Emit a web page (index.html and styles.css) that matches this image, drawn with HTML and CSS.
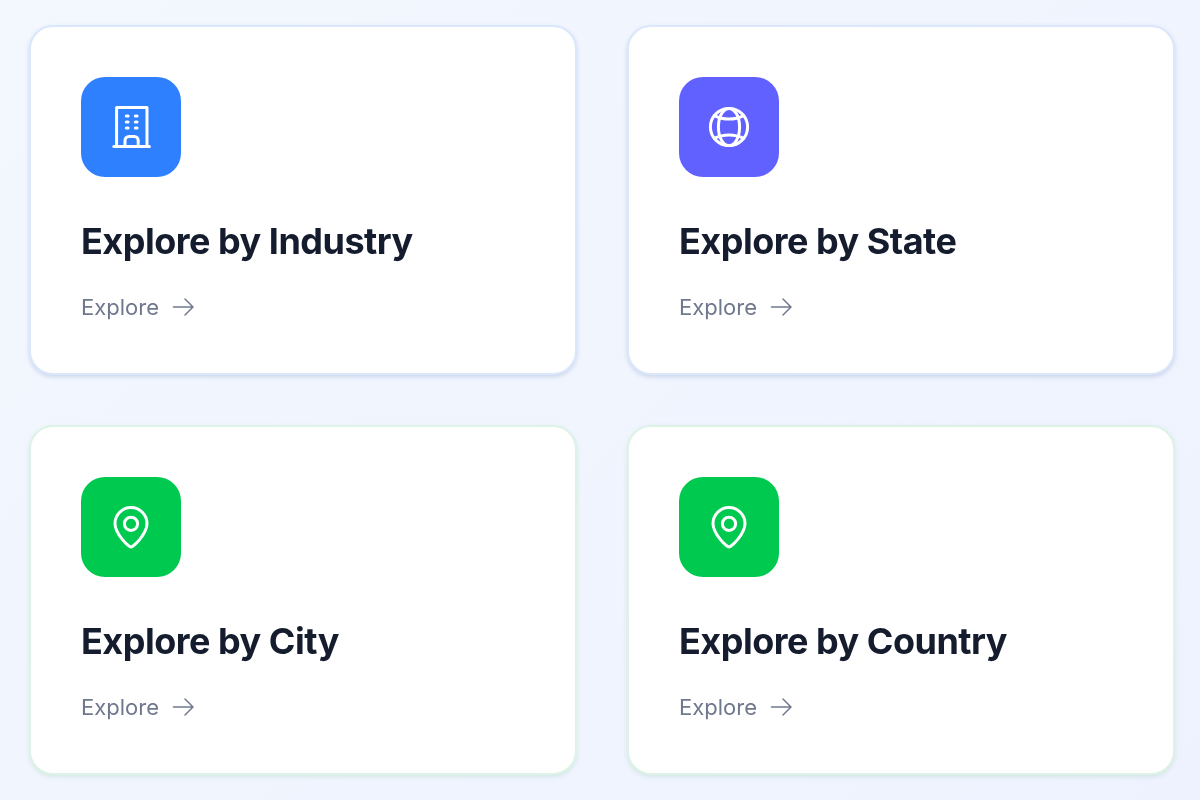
FILE: index.html
```html
<!DOCTYPE html>
<html lang="en">
<head>
  <meta charset="UTF-8" />
  <meta name="viewport" content="width=device-width, initial-scale=1" />
  <title>Explore</title>
  <link rel="stylesheet" href="styles.css">
</head>
<body>
  <div class="grid">
    <a class="card card-blue" href="#">
      <div class="icon icon-blue">
        <svg viewBox="0 0 24 24" width="48" height="48"><path d="M3.400 21.700h17.800M4.800 21.700V2.200h15.200v19.500M9 21.700v-3a2 2 0 0 1 2-2h2.600a2 2 0 0 1 2 2v3"/><path class="dots" d="M9.700 6.500h.8M14.200 6.500h.8M9.700 9.500h.8M14.200 9.500h.8M9.700 12.500h.8M14.200 12.500h.8"/></svg>
      </div>
      <h2>Explore by Industry</h2>
      <div class="link">Explore
        <svg viewBox="0 0 24 24" width="24" height="24"><path d="M2.500 12h19.500M14 4l8 8-8 8"/></svg>
      </div>
    </a>
    <a class="card card-blue" href="#">
      <div class="icon icon-purple">
        <svg viewBox="0 0 24 24" width="48" height="48"><circle cx="12" cy="12" r="9.300"/><ellipse cx="12" cy="12" rx="5.300" ry="9.300"/><path d="M4.650 6.300c4.500 2.300 10.200 2.300 14.700 0M4.650 17.700c4.500-2.300 10.200-2.300 14.700 0"/></svg>
      </div>
      <h2>Explore by State</h2>
      <div class="link">Explore
        <svg viewBox="0 0 24 24" width="24" height="24"><path d="M2.500 12h19.500M14 4l8 8-8 8"/></svg>
      </div>
    </a>
    <a class="card card-green" href="#">
      <div class="icon icon-green">
        <svg viewBox="0 0 24 24" width="48" height="48"><path d="M12 22c-1 0-8-6.300-8-11.700a8 8 0 0 1 16 0c0 5.400-7 11.700-8 11.700z"/><circle cx="12" cy="10.400" r="3.300"/></svg>
      </div>
      <h2>Explore by City</h2>
      <div class="link">Explore
        <svg viewBox="0 0 24 24" width="24" height="24"><path d="M2.500 12h19.500M14 4l8 8-8 8"/></svg>
      </div>
    </a>
    <a class="card card-green" href="#">
      <div class="icon icon-green">
        <svg viewBox="0 0 24 24" width="48" height="48"><path d="M12 22c-1 0-8-6.300-8-11.700a8 8 0 0 1 16 0c0 5.400-7 11.700-8 11.700z"/><circle cx="12" cy="10.400" r="3.300"/></svg>
      </div>
      <h2>Explore by Country</h2>
      <div class="link">Explore
        <svg viewBox="0 0 24 24" width="24" height="24"><path d="M2.500 12h19.500M14 4l8 8-8 8"/></svg>
      </div>
    </a>
  </div>
</body>
</html>
```

FILE: styles.css
```css
body {
  font-family: Inter, "Liberation Sans", sans-serif;
  margin: 0;
  height: 800px;
  overflow: hidden;
  background: linear-gradient(135deg, #f3f8fe 0%, #eef2fe 100%);
}

.grid {
  display: grid;
  grid-template-columns: repeat(2, 548px);
  grid-auto-rows: 350px;
  gap: 50px;
  padding: 25px 29px;
  filter: blur(0.5px);
}

.card {
  display: block;
  box-sizing: border-box;
  padding: 50px;
  background: #fff;
  border: 2px solid;
  border-radius: 24px;
  color: inherit;
  text-decoration: none;
}

.card-blue {
  border-color: #dbe7fb;
  box-shadow: 0 2px 4px rgba(120, 140, 190, 0.3);
}

.card-green {
  border-color: #dcf3e6;
  box-shadow: 0 2px 4px rgba(130, 190, 160, 0.25);
}

.icon {
  display: flex;
  align-items: center;
  justify-content: center;
  width: 100px;
  height: 100px;
  border-radius: 24px;
}

.icon svg {
  fill: none;
  stroke: #fff;
  stroke-width: 1.5;
  stroke-linecap: round;
  stroke-linejoin: round;
}

.icon svg .dots {
  stroke-width: 1.6;
}

.icon-blue {
  background: #2e80ff;
}

.icon-purple {
  background: #6161ff;
}

.icon-green {
  background: #00c950;
}

h2 {
  margin: 42px 0 0;
  font-size: 36px;
  line-height: 44px;
  font-weight: 700;
  letter-spacing: -0.5px;
  color: #141c2e;
}

.link {
  display: flex;
  align-items: center;
  gap: 12px;
  margin-top: 28px;
  font-size: 22px;
  line-height: 32px;
  color: #6f788c;
}

.link svg {
  fill: none;
  stroke: #6f788c;
  stroke-width: 1.5;
  stroke-linecap: round;
  stroke-linejoin: round;
}
```
